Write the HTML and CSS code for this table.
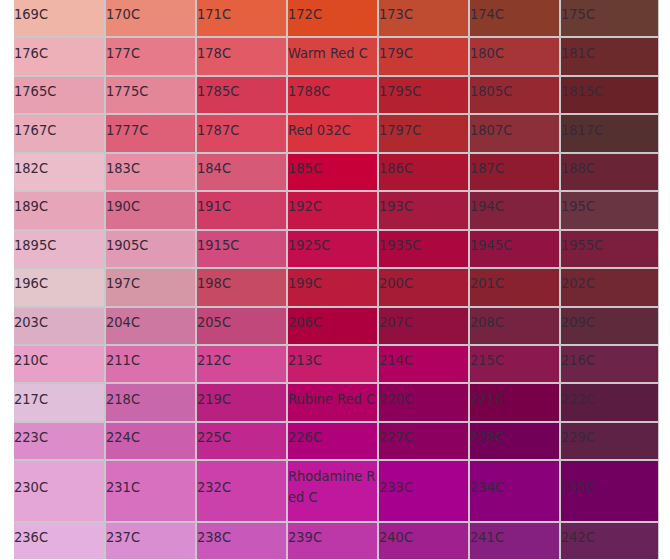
FILE: index.html
```html
<!DOCTYPE html>
<html>
<head>
<meta charset="utf-8">
<link rel="stylesheet" href="styles.css">
</head>
<body>
<div class="chart">
  <div class="sw" style="background:#efb6a7">169C</div>
  <div class="sw" style="background:#ea8a78">170C</div>
  <div class="sw" style="background:#e5603f">171C</div>
  <div class="sw" style="background:#dc4a24">172C</div>
  <div class="sw" style="background:#bf4c30">173C</div>
  <div class="sw" style="background:#8b3b2a">174C</div>
  <div class="sw" style="background:#683b33">175C</div>

  <div class="sw" style="background:#eeb0b8">176C</div>
  <div class="sw" style="background:#e77a88">177C</div>
  <div class="sw" style="background:#e25a66">178C</div>
  <div class="sw" style="background:#d84240">Warm Red C</div>
  <div class="sw" style="background:#c93a35">179C</div>
  <div class="sw" style="background:#a63538">180C</div>
  <div class="sw" style="background:#6d2a2d">181C</div>

  <div class="sw" style="background:#e7a0b0">1765C</div>
  <div class="sw" style="background:#e38697">1775C</div>
  <div class="sw" style="background:#d43a56">1785C</div>
  <div class="sw" style="background:#d22a40">1788C</div>
  <div class="sw" style="background:#b42230">1795C</div>
  <div class="sw" style="background:#962832">1805C</div>
  <div class="sw" style="background:#692228">1815C</div>

  <div class="sw" style="background:#e9acba">1767C</div>
  <div class="sw" style="background:#de6078">1777C</div>
  <div class="sw" style="background:#dc4860">1787C</div>
  <div class="sw" style="background:#d8343f">Red 032C</div>
  <div class="sw" style="background:#ae2a2e">1797C</div>
  <div class="sw" style="background:#8b3038">1807C</div>
  <div class="sw" style="background:#543031">1817C</div>

  <div class="sw" style="background:#ebbcca">182C</div>
  <div class="sw" style="background:#e590a6">183C</div>
  <div class="sw" style="background:#d65a78">184C</div>
  <div class="sw" style="background:#c60038">185C</div>
  <div class="sw" style="background:#ad1431">186C</div>
  <div class="sw" style="background:#8e1b2f">187C</div>
  <div class="sw" style="background:#692535">188C</div>

  <div class="sw" style="background:#e6a5b8">189C</div>
  <div class="sw" style="background:#da7090">190C</div>
  <div class="sw" style="background:#d03c66">191C</div>
  <div class="sw" style="background:#c61648">192C</div>
  <div class="sw" style="background:#a41a40">193C</div>
  <div class="sw" style="background:#83223e">194C</div>
  <div class="sw" style="background:#6a3542">195C</div>

  <div class="sw" style="background:#e7b6ca">1895C</div>
  <div class="sw" style="background:#e09ab4">1905C</div>
  <div class="sw" style="background:#d14b7d">1915C</div>
  <div class="sw" style="background:#c20e4c">1925C</div>
  <div class="sw" style="background:#ad0740">1935C</div>
  <div class="sw" style="background:#921342">1945C</div>
  <div class="sw" style="background:#7c1f3e">1955C</div>

  <div class="sw" style="background:#e3c6cb">196C</div>
  <div class="sw" style="background:#d597a5">197C</div>
  <div class="sw" style="background:#c64a63">198C</div>
  <div class="sw" style="background:#bc1c3c">199C</div>
  <div class="sw" style="background:#a51c34">200C</div>
  <div class="sw" style="background:#88222e">201C</div>
  <div class="sw" style="background:#722832">202C</div>

  <div class="sw" style="background:#dbaec6">203C</div>
  <div class="sw" style="background:#cc78a0">204C</div>
  <div class="sw" style="background:#c0487a">205C</div>
  <div class="sw" style="background:#ae003e">206C</div>
  <div class="sw" style="background:#921040">207C</div>
  <div class="sw" style="background:#742440">208C</div>
  <div class="sw" style="background:#5e2a3c">209C</div>

  <div class="sw" style="background:#e89fc8">210C</div>
  <div class="sw" style="background:#dc70ac">211C</div>
  <div class="sw" style="background:#d44a96">212C</div>
  <div class="sw" style="background:#c81c6c">213C</div>
  <div class="sw" style="background:#b00060">214C</div>
  <div class="sw" style="background:#8c1850">215C</div>
  <div class="sw" style="background:#6c2448">216C</div>

  <div class="sw" style="background:#dfbfd9">217C</div>
  <div class="sw" style="background:#c868aa">218C</div>
  <div class="sw" style="background:#ba2080">219C</div>
  <div class="sw" style="background:#b20064">Rubine Red C</div>
  <div class="sw" style="background:#8c005a">220C</div>
  <div class="sw" style="background:#780048">221C</div>
  <div class="sw" style="background:#5a1c40">222C</div>

  <div class="sw" style="background:#dc8cc8">223C</div>
  <div class="sw" style="background:#cc5eae">224C</div>
  <div class="sw" style="background:#c02890">225C</div>
  <div class="sw" style="background:#b0007a">226C</div>
  <div class="sw" style="background:#8c0060">227C</div>
  <div class="sw" style="background:#720058">228C</div>
  <div class="sw" style="background:#5e2246">229C</div>

  <div class="sw" style="background:#e4a6d6">230C</div>
  <div class="sw" style="background:#d870c0">231C</div>
  <div class="sw" style="background:#cc40ac">232C</div>
  <div class="sw" style="background:#c0189c">Rhodamine Red C</div>
  <div class="sw" style="background:#a8008e">233C</div>
  <div class="sw" style="background:#8a007a">234C</div>
  <div class="sw" style="background:#720060">235C</div>

  <div class="sw" style="background:#e4b0e0">236C</div>
  <div class="sw" style="background:#d88ed0">237C</div>
  <div class="sw" style="background:#c858ba">238C</div>
  <div class="sw" style="background:#bc38a8">239C</div>
  <div class="sw" style="background:#a02090">240C</div>
  <div class="sw" style="background:#862080">241C</div>
  <div class="sw" style="background:#682458">242C</div>
</div>
</body>
</html>
```

FILE: styles.css
```css
html, body {
  margin: 0;
  padding: 0;
  background: #ffffff;
}

body {
  font-family: "DejaVu Sans Condensed", "DejaVu Sans", sans-serif;
  font-stretch: condensed;
  font-size: 14.5px;
  color: #38283a;
}

.chart {
  display: grid;
  grid-template-columns: 90px repeat(5, 89px) 97px;
  grid-template-rows: repeat(12, 36.45px) 59.3px 36.45px;
  gap: 2px;
  width: 644px;
  margin-left: 14px;
  background: #c9c7c9;
  border-right: 1px solid #c9c7c9;
}

.sw {
  display: flex;
  align-items: center;
  padding: 0 0 7px 0;
  line-height: 21px;
  word-break: break-all;
  overflow: hidden;
}
```
